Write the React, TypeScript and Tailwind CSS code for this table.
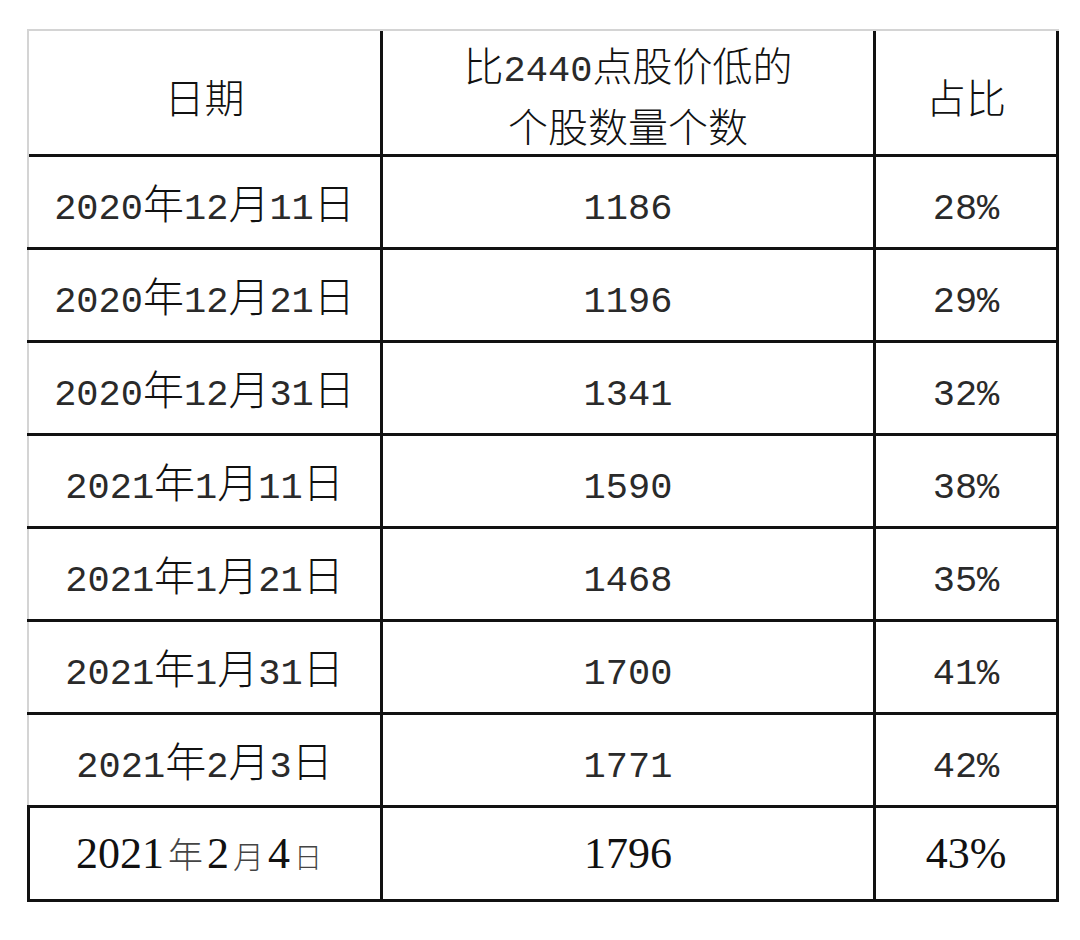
import React from 'react'

const rows = [
  { date: '2020年12月11日', count: '1186', pct: '28%' },
  { date: '2020年12月21日', count: '1196', pct: '29%' },
  { date: '2020年12月31日', count: '1341', pct: '32%' },
  { date: '2021年1月11日', count: '1590', pct: '38%' },
  { date: '2021年1月21日', count: '1468', pct: '35%' },
  { date: '2021年1月31日', count: '1700', pct: '41%' },
  { date: '2021年2月3日', count: '1771', pct: '42%' },
]

// split text into runs so the half-width digits and the CJK characters get their own size
function Mixed({ text, cjk = 'text-[41px]' }: { text: string; cjk?: string }) {
  const parts = text.match(/[\u4e00-\u9fff]+|[^\u4e00-\u9fff]+/g) || []
  return (
    <span className="whitespace-nowrap">
      {parts.map((p, i) =>
        /[\u4e00-\u9fff]/.test(p) ? (
          <span key={i} className={`${cjk} font-light font-['Noto_Sans_CJK_SC',sans-serif]`}>
            {p}
          </span>
        ) : (
          <span key={i} className="text-[37px] text-[#2a2a2a] font-['Liberation_Mono',monospace]">
            {p}
          </span>
        )
      )}
    </span>
  )
}

const cell = 'flex items-center justify-center border-r-[3px] border-[#111]'

export default function App() {
  return (
    <div className="w-[1080px] h-[940px] bg-white pt-[29px] pl-[27px]">
      <div className="w-[1032px] text-[#111]">
        {/* header */}
        <div className="grid grid-cols-[356px_493px_183px] h-[128px] border-t-2 border-[#d4d4d4] border-b-[3px] border-b-[#111]">
          <div className={`${cell} border-l-2 border-l-[#d4d4d4]`}>
            <Mixed text="日期" cjk="text-[40px]" />
          </div>
          <div className={`${cell} flex-col leading-[50px] pt-2`}>
            <Mixed text="比2440点股价低的" cjk="text-[40px]" />
            <Mixed text="个股数量个数" cjk="text-[40px]" />
          </div>
          <div className={cell}>
            <Mixed text="占比" cjk="text-[40px]" />
          </div>
        </div>

        {rows.map((r) => (
          <div key={r.date} className="grid grid-cols-[356px_493px_183px] h-[93px] border-b-[3px] border-[#111]">
            <div className={`${cell} border-l-2 border-l-[#d4d4d4] pt-1`}>
              <Mixed text={r.date} />
            </div>
            <div className={`${cell} pt-4`}>
              <Mixed text={r.count} />
            </div>
            <div className={`${cell} pt-4`}>
              <Mixed text={r.pct} />
            </div>
          </div>
        ))}

        {/* last row is typed in a different font */}
        <div className="grid grid-cols-[356px_493px_183px] h-[94px] border-b-[3px] border-[#111] font-['Liberation_Serif','Noto_Sans_CJK_SC',serif]">
          <div className={`${cell} border-l-[3px] pr-3`}>
            <span className="whitespace-nowrap">
              <span className="text-[44px]">2021</span>
              <span className="text-[35px] text-[#444] font-light mx-1">年</span>
              <span className="text-[44px]">2</span>
              <span className="text-[31px] text-[#444] font-light mx-1">月</span>
              <span className="text-[44px]">4</span>
              <span className="text-[28px] text-[#444] font-light ml-1">日</span>
            </span>
          </div>
          <div className={`${cell} text-[44px]`}>1796</div>
          <div className={`${cell} text-[44px]`}>43%</div>
        </div>
      </div>
    </div>
  )
}
